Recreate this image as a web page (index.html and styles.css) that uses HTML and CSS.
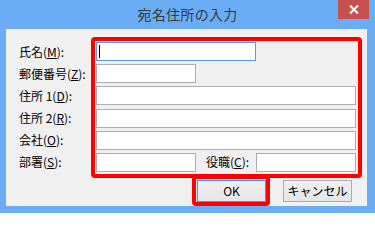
FILE: index.html
```html
<!DOCTYPE html>
<html lang="ja">
<head>
<meta charset="utf-8">
<title>宛名住所の入力</title>
<link rel="stylesheet" href="styles.css">
</head>
<body>
<div class="window">
  <div class="titlebar">
    <div class="title">宛名住所の入力</div>
    <div class="close" aria-label="閉じる">
      <svg width="10" height="9" viewBox="0 0 10 9"><path d="M1 0.5 L9 8.5 M9 0.5 L1 8.5" stroke="#fff" stroke-width="2"/></svg>
    </div>
  </div>
  <div class="client">
    <div class="form">
      <label class="lbl">氏名(<u>M</u>):</label>
      <div class="row"><div class="field w160 focused"><span class="caret"></span></div></div>
      <label class="lbl">郵便番号(<u>Z</u>):</label>
      <div class="row"><div class="field w100"></div></div>
      <label class="lbl">住所 1(<u>D</u>):</label>
      <div class="row"><div class="field w260"></div></div>
      <label class="lbl">住所 2(<u>R</u>):</label>
      <div class="row"><div class="field w260"></div></div>
      <label class="lbl">会社(<u>O</u>):</label>
      <div class="row"><div class="field w260"></div></div>
      <label class="lbl">部署(<u>S</u>):</label>
      <div class="row">
        <div class="field w100"></div>
        <label class="lbl sub">役職(<u>C</u>):</label>
        <div class="field w100"></div>
      </div>
    </div>
    <div class="buttons">
      <button class="btn default">OK</button>
      <button class="btn">キャンセル</button>
    </div>
    <div class="mark mark-fields"></div>
    <div class="mark mark-ok"></div>
  </div>
</div>
</body>
</html>
```

FILE: styles.css
```css
html, body {
  margin: 0;
  padding: 0;
}
body {
  width: 375px;
  height: 213px;
  overflow: hidden;
  font-family: "Noto Sans CJK JP", "Noto Sans", sans-serif;
}
.window {
  width: 375px;
  height: 213px;
  background: #6badf5;
  display: flex;
  flex-direction: column;
}
.titlebar {
  height: 29px;
  display: flex;
  align-items: center;
  justify-content: center;
  position: relative;
}
.title {
  font-size: 14px;
  letter-spacing: 0.3px;
  color: #383838;
  line-height: 29px;
}
.close {
  position: absolute;
  top: 0;
  left: 338px;
  width: 31px;
  height: 19px;
  background: #c75050;
  display: flex;
  align-items: center;
  justify-content: center;
}
.close svg { display: block; }
.client {
  position: relative;
  margin-left: 6px;
  width: 361px;
  height: 177px;
  background: #f0f0f0;
  box-sizing: border-box;
}
.form {
  display: grid;
  grid-template-columns: 77px auto;
  grid-auto-rows: 19px;
  row-gap: 3.2px;
  padding: 13px 0 0 13px;
  font-size: 12px;
  color: #000;
}
.lbl {
  display: flex;
  align-items: center;
  line-height: 14px;
  white-space: nowrap;
}
.lbl u {
  text-decoration: underline;
  text-underline-offset: 1px;
}
.row {
  display: flex;
  align-items: stretch;
}
.sub {
  margin-left: 10px;
  width: 50px;
}
.field {
  box-sizing: border-box;
  height: 19px;
  background: #fff;
  border: 1px solid #abadb3;
  position: relative;
}
.field.focused {
  border-color: #569de5;
}
.w100 { width: 100px; }
.w160 { width: 160px; }
.w260 { width: 260px; }
.caret {
  position: absolute;
  left: 2px;
  top: 2px;
  width: 1px;
  height: 13px;
  background: #000;
}
.buttons {
  display: flex;
  justify-content: flex-end;
  gap: 17px;
  padding: 8px 15px 0 0;
}
.btn {
  box-sizing: border-box;
  width: 69px;
  height: 22px;
  margin: 0;
  padding: 0;
  border: 1px solid #acacac;
  border-radius: 0;
  background: linear-gradient(#f0f0f0, #e5e5e5);
  font-family: "Noto Sans CJK JP", "Noto Sans", sans-serif;
  font-size: 12px;
  line-height: 18px;
  color: #000;
}
.btn.default {
  border-color: #3c9ae8;
  box-shadow: inset 0 0 0 1px #dcecfc;
}
.mark {
  position: absolute;
  box-sizing: border-box;
  border: 4px solid #ff0000;
  border-radius: 4px;
  pointer-events: none;
}
.mark-fields {
  left: 85px;
  top: 8px;
  width: 271px;
  height: 141px;
}
.mark-ok {
  left: 186px;
  top: 146px;
  width: 78px;
  height: 31px;
}
```
